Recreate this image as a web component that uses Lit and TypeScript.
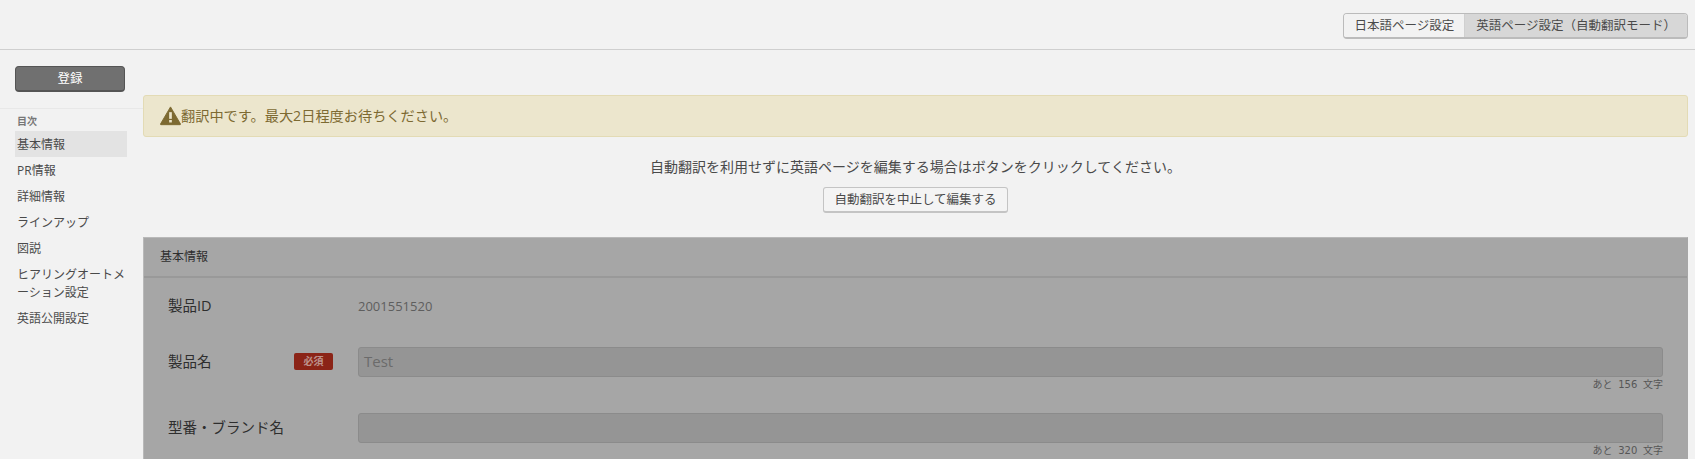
import { LitElement, html, css } from "lit";
import { customElement } from "lit/decorators.js";

@customElement("app-root")
export class AppRoot extends LitElement {
  static styles = css`
    :host { display: block; width: 1695px; height: 459px; overflow: hidden; background: #f2f2f2; color: #4a4a4a;
      font-family: "Open Sans", "Noto Sans CJK JP", sans-serif; font-size: 12.5px; }
    * { box-sizing: border-box; }
    .top { height: 50px; border-bottom: 1px solid #cfcfcf; display: flex; justify-content: flex-end; align-items: flex-start; padding: 13px 7px 0 0; }
    .seg { display: flex; height: 26px; border: 1px solid #bbb; border-bottom-width: 2px; border-radius: 4px; overflow: hidden; line-height: 23px; }
    .seg span { padding: 0 10px; background: #f2f2f2; }
    .seg span + span { background: #d7d7d7; border-left: 1px solid #d0d0d0; padding: 0 11px; }
    .main { display: flex; }
    .side { width: 143px; flex: none; }
    .reg { margin: 16px 18px 0 15px; height: 26px; background: #707070; color: #fff; border: 1px solid #555; border-bottom-width: 2px; border-radius: 4px; text-align: center; line-height: 23px; }
    .toc { margin-top: 16px; border-top: 1px solid #e8e8e8; padding: 4px 16px 0 15px; font-size: 12px; }
    .toc h4 { margin: 0 0 2px; font-size: 10px; font-weight: 700; color: #777; line-height: 16px; padding-left: 2px; }
    .toc div { padding: 5px 2px 3px; line-height: 18px; }
    .toc .on { background: #e3e3e3; }
    .content { flex: 1; padding: 45px 7px 0 0; min-width: 0; }
    .alert { height: 42px; background: #ece6cd; border: 1px solid #e3dbb5; border-radius: 3px; color: #7d6a32; display: flex; align-items: center; padding: 0 0 2px 16px; font-size: 14.2px; }
    .alert svg { flex: none; width: 21px; height: 21px; }
    .note { text-align: center; margin-top: 20px; line-height: 20px; font-size: 14px; }
    .stop { display: block; width: fit-content; margin: 10px auto 0; height: 26px; padding: 0 10px; background: #f4f4f4; border: 1px solid #c4c4c4; border-bottom-width: 2px; border-radius: 3px; line-height: 23px; }
    .panel { margin-top: 24px; height: 240px; background: #a6a6a6; border: 1px solid #b9b9b9; border-bottom: 0; border-right-color: #a6a6a6; color: #2e2e2e; }
    .panel h3 { margin: 0; height: 40px; border-bottom: 2px solid #999; font-size: 12px; font-weight: 400; line-height: 37px; padding-left: 16px; }
    .row { display: grid; grid-template-columns: 126px 39px 1fr; padding: 0 24px; align-items: start; }
    .row label { font-size: 14.5px; line-height: 30px; }
    .req { width: 39px; height: 17px; margin-top: 6px; border-radius: 2px; background: #8b2417; color: #bd928c; font-size: 10px; font-weight: 700; text-align: center; line-height: 17px; }
    .val { grid-column: 3; margin-left: 25px; color: #5e5e5e; font-size: 13px; line-height: 30px; }
    .field { grid-column: 3; margin-left: 25px; }
    .input { height: 30px; background: #959595; border: 1px solid #8b8b8b; border-radius: 3px; color: #6b6b6b; padding-left: 5px; font-size: 15px; line-height: 27px; }
    .count { text-align: right; font-family: "DejaVu Sans", "Noto Sans CJK JP", sans-serif; font-size: 10px; word-spacing: 2.5px; color: #565656; line-height: 15px; }
    .r1 { margin-top: 13px; }
    .r2 { margin-top: 26px; }
    .r3 { margin-top: 21px; }
  `;

  render() {
    const toc = ["基本情報", "PR情報", "詳細情報", "ラインアップ", "図説", "ヒアリングオートメーション設定", "英語公開設定"];
    return html`
      <div class="top">
        <div class="seg"><span>日本語ページ設定</span><span>英語ページ設定（自動翻訳モード）</span></div>
      </div>
      <div class="main">
        <div class="side">
          <div class="reg">登録</div>
          <div class="toc">
            <h4>目次</h4>
            ${toc.map((t, i) => html`<div class=${i === 0 ? "on" : ""}>${t}</div>`)}
          </div>
        </div>
        <div class="content">
          <div class="alert">
            <svg viewBox="0 0 22 20"><path d="M11 1 L21.5 19 a.5.5 0 0 1 -.4.6 H.9 a.5.5 0 0 1 -.4-.6 Z" fill="#7d6a32" stroke="#7d6a32" stroke-linejoin="round"/><rect x="9.6" y="6.5" width="2.8" height="7" fill="#ece6cd"/><rect x="9.6" y="14.7" width="2.8" height="2.6" fill="#ece6cd"/></svg>
            <span>翻訳中です。最大2日程度お待ちください。</span>
          </div>
          <div class="note">自動翻訳を利用せずに英語ページを編集する場合はボタンをクリックしてください。</div>
          <div class="stop">自動翻訳を中止して編集する</div>
          <div class="panel">
            <h3>基本情報</h3>
            <div class="row r1"><label>製品ID</label><span></span><div class="val">2001551520</div></div>
            <div class="row r2"><label>製品名</label><div class="req">必須</div>
              <div class="field"><div class="input">Test</div><div class="count">あと 156 文字</div></div></div>
            <div class="row r3"><label>型番・ブランド名</label><span></span>
              <div class="field"><div class="input"></div><div class="count">あと 320 文字</div></div></div>
          </div>
        </div>
      </div>
    `;
  }
}
